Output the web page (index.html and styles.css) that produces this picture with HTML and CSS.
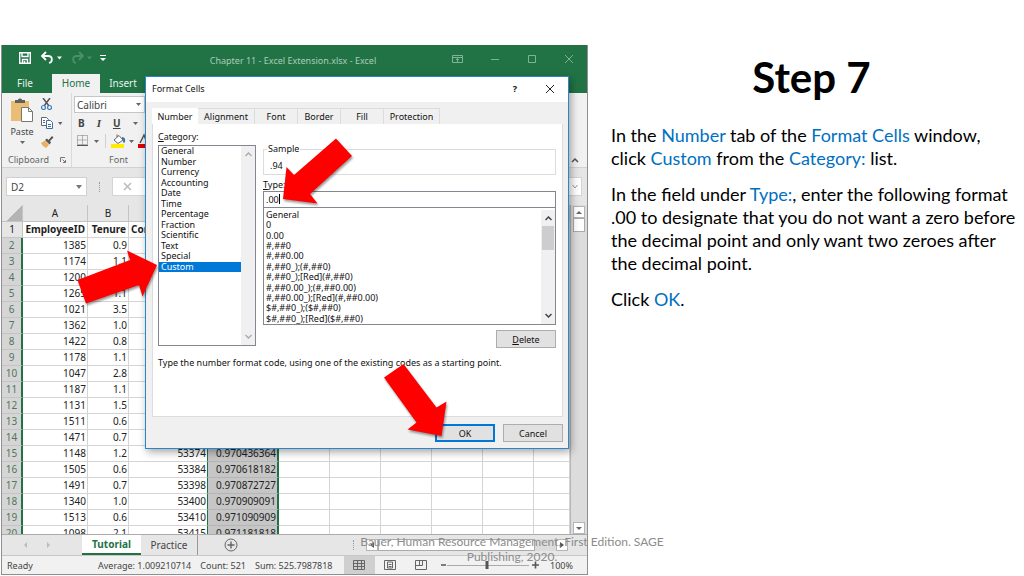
FILE: index.html
```html
<!DOCTYPE html>
<html lang="en">
<head>
<meta charset="utf-8">
<title>Step 7</title>
<link rel="stylesheet" href="styles.css">
</head>
<body>
<main class="slide">
  <section class="shot">
    <div class="excel">
      <header class="titlebar">
        <div class="quick">
          <svg class="ico" width="14" height="14" viewBox="0 0 14 14" fill="none" stroke="#fff" stroke-width="1.4"><path d="M1.7 1.7h10.6v10.6H1.700zM4 2v3.500h6V2M4.500 12V8.500h5V12M6.500 10v2"/></svg>
          <svg class="ico" width="22" height="14" viewBox="0 0 22 14" fill="none" stroke="#fff" stroke-width="1.800"><path d="M6 1L2 5l4 4M2.500 5H8c5 0 5 6 1 7"/><path d="M17 5.500h5l-2.500 3z" fill="#fff" stroke="none"/></svg>
          <svg class="ico" width="22" height="14" viewBox="0 0 22 14" fill="none" stroke="#4c9069" stroke-width="1.800"><path d="M9 1l4 4-4 4M12.500 5H7c-5 0-5 6-1 7"/><path d="M17 5.500h5l-2.500 3z" fill="#4c9069" stroke="none"/></svg>
          <svg class="ico" width="6" height="8" viewBox="0 0 6 8"><path d="M0 1h6v1H0zM0 4h6L3 7z" fill="#fff"/></svg>
        </div>
        <span class="doc">Chapter 11 - Excel Extension.xlsx - Excel</span>
        <div class="winbtns">
          <svg width="11" height="10" viewBox="0 0 11 10" fill="none" stroke="#7db594"><path d="M.5 1.500h10v7H.5zM.5 3.500h10M5.500 8V4.500M4 6l1.500-1.500L7 6"/></svg>
          <svg width="10" height="10" viewBox="0 0 10 10" stroke="#7db594"><path d="M1 5.500h8"/></svg>
          <svg width="10" height="10" viewBox="0 0 10 10" fill="none" stroke="#7db594"><path d="M1.500 1.500h7v7h-7z"/></svg>
          <svg width="10" height="10" viewBox="0 0 10 10" stroke="#7db594"><path d="M1 1l8 8M9 1L1 9"/></svg>
        </div>
      </header>
      <nav class="tabs">
        <button class="tab">File</button>
        <button class="tab tab-on">Home</button>
        <button class="tab">Insert</button>
      </nav>
      <div class="ribbon">
        <div class="group clip">
          <div class="paste">
            <svg width="24" height="25" viewBox="0 0 24 25"><path d="M1 3h18v20H1z" fill="#e9bd72"/><path d="M5 5V2h3c0-2 4-2 4 0h3v3z" fill="#606060"/><path d="M11.500 9.500h7l4 4v10h-11z" fill="#fff" stroke="#777"/><path d="M18.500 9.500v4h4" fill="none" stroke="#777"/></svg>
            <span>Paste</span>
            <svg width="5" height="3" viewBox="0 0 5 3"><path d="M0 0h5L2.500 3z" fill="#666"/></svg>
          </div>
          <div class="clip-tools">
            <svg width="24" height="12" viewBox="0 0 24 12" fill="none"><path d="M3 0l6 8M10 0L4 8" stroke="#555" stroke-width="1.500"/><circle cx="3.500" cy="9.500" r="2" stroke="#3a7fc0" stroke-width="1.200"/><circle cx="9.500" cy="9.500" r="2" stroke="#3a7fc0" stroke-width="1.200"/></svg>
            <svg width="24" height="12" viewBox="0 0 24 12" fill="#fff"><path d="M1.500.5h5l2 2v6h-7z" stroke="#666"/><path d="M6.500 3.500h4l2 2v6h-6z" stroke="#3f6f9f"/><path d="M3 3.500h2M3 5.500h2M8 7.500h3M8 9.500h3" stroke="#3f6f9f"/><path d="M18 5h4.500l-2.300 3z" fill="#666"/></svg>
            <svg width="24" height="12" viewBox="0 0 24 12"><path d="M1 7l4-2.500L9 9l-3 3C4 11 2 9 1 7z" fill="#eab060"/><path d="M5 4l2-1.500 1.500 1.500L12 0l1.500 1.500L10 5l1 1.500-1.500 2z" fill="#555"/></svg>
          </div>
          <span class="glabel">Clipboard</span>
          <svg class="launch" width="6" height="6" viewBox="0 0 6 6" fill="none" stroke="#777"><path d="M.5 5V.5H5M2.500 2.500l3 3M5.500 3v2.500H3"/></svg>
        </div>
        <div class="group font">
          <div class="fontbox">Calibri<svg width="5" height="3" viewBox="0 0 5 3"><path d="M0 0h5L2.500 3z" fill="#666"/></svg></div>
          <div class="biu"><b>B</b><i>I</i><u>U</u><svg width="5" height="3" viewBox="0 0 5 3"><path d="M0 0h5L2.500 3z" fill="#666"/></svg></div>
          <svg class="fills" width="74" height="16" viewBox="0 0 74 16" fill="none"><path d="M.5 2.500h10v9H.5zM5.500 2.500v9M.5 7h10" stroke="#777" stroke-dasharray="1 1"/><path d="M0 12.500h11" stroke="#555"/><path d="M17 7h5l-2.500 3zM52 7h5l-2.500 3z" fill="#666"/><path d="M28.500 1v14" stroke="#d0d0d0"/><path d="M37 7l5-4.500 4 4.500-5 3.500zM40 4V1.500" fill="#fff" stroke="#666"/><path d="M45 5c3 0 2 3 2 4.500" stroke="#3573a8" stroke-width="2"/><path d="M34 11h13v4H34z" fill="#ffec00"/><path d="M61 11h10v4H61z" fill="#e00000"/><path d="M63 10l4-8 3 8" stroke="#555" stroke-width="1.500"/></svg>
          <span class="glabel">Font</span>
        </div>
        <svg class="collapse" width="8" height="6" viewBox="0 0 8 6" fill="none" stroke="#555" stroke-width="1.500"><path d="M1 5l3-3 3 3"/></svg>
      </div>
      <div class="formula">
        <div class="namebox">D2<svg width="6" height="4" viewBox="0 0 6 4"><path d="M0 0h6L3 4z" fill="#777"/></svg></div>
        <span class="dots"></span>
        <div class="fx"><svg width="9" height="9" viewBox="0 0 9 9" stroke="#bbb" stroke-width="1.500"><path d="M1 1l7 7M8 1L1 8"/></svg>
          <svg width="6" height="5" viewBox="0 0 6 5" fill="none" stroke="#999"><path d="M.5 1L3 4l2.500-3"/></svg></div>
      </div>
      <div class="sheet">
        <div class="cells">
          <table class="grid">
            <colgroup><col class="c-n"><col class="c-a"><col class="c-b"><col class="c-c"><col class="c-d"><col class="c-e"><col class="c-e"><col class="c-e"><col class="c-e"><col class="c-e"><col></colgroup>
            <thead><tr><th class="corner"></th><th>A</th><th>B</th><th>C</th><th>D</th><th>E</th><th>F</th><th>G</th><th>H</th><th>I</th><th></th></tr></thead>
            <tbody>
            <tr class="names"><th>1</th><td>EmployeeID</td><td>Tenure</td><td>Comp</td><td></td><td></td><td></td><td></td><td></td><td></td><td></td></tr>
            <tr><th>2</th><td>1385</td><td>0.9</td><td></td><td></td><td></td><td></td><td></td><td></td><td></td><td></td></tr>
            <tr><th>3</th><td>1174</td><td>1.1</td><td></td><td></td><td></td><td></td><td></td><td></td><td></td><td></td></tr>
            <tr><th>4</th><td>1200</td><td></td><td></td><td></td><td></td><td></td><td></td><td></td><td></td><td></td></tr>
            <tr><th>5</th><td>1265</td><td>1.1</td><td></td><td></td><td></td><td></td><td></td><td></td><td></td><td></td></tr>
            <tr><th>6</th><td>1021</td><td>3.5</td><td></td><td></td><td></td><td></td><td></td><td></td><td></td><td></td></tr>
            <tr><th>7</th><td>1362</td><td>1.0</td><td></td><td></td><td></td><td></td><td></td><td></td><td></td><td></td></tr>
            <tr><th>8</th><td>1422</td><td>0.8</td><td></td><td></td><td></td><td></td><td></td><td></td><td></td><td></td></tr>
            <tr><th>9</th><td>1178</td><td>1.1</td><td></td><td></td><td></td><td></td><td></td><td></td><td></td><td></td></tr>
            <tr><th>10</th><td>1047</td><td>2.8</td><td></td><td></td><td></td><td></td><td></td><td></td><td></td><td></td></tr>
            <tr><th>11</th><td>1187</td><td>1.1</td><td></td><td></td><td></td><td></td><td></td><td></td><td></td><td></td></tr>
            <tr><th>12</th><td>1131</td><td>1.5</td><td></td><td></td><td></td><td></td><td></td><td></td><td></td><td></td></tr>
            <tr><th>13</th><td>1511</td><td>0.6</td><td></td><td></td><td></td><td></td><td></td><td></td><td></td><td></td></tr>
            <tr><th>14</th><td>1471</td><td>0.7</td><td></td><td></td><td></td><td></td><td></td><td></td><td></td><td></td></tr>
            <tr><th>15</th><td>1148</td><td>1.2</td><td>53374</td><td>0.970436364</td><td></td><td></td><td></td><td></td><td></td><td></td></tr>
            <tr><th>16</th><td>1505</td><td>0.6</td><td>53384</td><td>0.970618182</td><td></td><td></td><td></td><td></td><td></td><td></td></tr>
            <tr><th>17</th><td>1491</td><td>0.7</td><td>53398</td><td>0.970872727</td><td></td><td></td><td></td><td></td><td></td><td></td></tr>
            <tr><th>18</th><td>1340</td><td>1.0</td><td>53400</td><td>0.970909091</td><td></td><td></td><td></td><td></td><td></td><td></td></tr>
            <tr><th>19</th><td>1513</td><td>0.6</td><td>53410</td><td>0.971090909</td><td></td><td></td><td></td><td></td><td></td><td></td></tr>
            <tr><th>20</th><td>1098</td><td>2.1</td><td>53415</td><td>0.971181818</td><td></td><td></td><td></td><td></td><td></td><td></td></tr>
            </tbody>
          </table>
        </div>
        <div class="vscroll">
          <span class="sbtn"><svg width="6" height="3" viewBox="0 0 6 3"><path d="M0 3h6L3 0z" fill="#666"/></svg></span>
          <span class="sthumb"></span>
          <span class="sbtn sdown"><svg width="6" height="3" viewBox="0 0 6 3"><path d="M0 0h6L3 3z" fill="#666"/></svg></span>
        </div>
      </div>
      <div class="sheettabs">
        <div class="nav"><svg width="26" height="6" viewBox="0 0 26 6" fill="#bbb"><path d="M3 0v6L0 3zM23 0v6l3-3z"/></svg></div>
        <button class="stab stab-on">Tutorial</button>
        <button class="stab">Practice</button>
        <svg class="add" width="14" height="14" viewBox="0 0 14 14" fill="none" stroke="#666"><circle cx="7" cy="7" r="6"/><path d="M7 3.500v7M3.500 7h7" stroke-width="1.400"/></svg>
        <span class="dots"></span>
        <div class="hscroll">
          <span class="hbtn"><svg width="4" height="6" viewBox="0 0 4 6"><path d="M4 0v6L0 3z" fill="#555"/></svg></span>
          <span class="hthumb"></span>
          <span class="hbtn"><svg width="4" height="6" viewBox="0 0 4 6"><path d="M0 0v6l4-3z" fill="#555"/></svg></span>
        </div>
      </div>
      <footer class="status">
        <span class="ready">Ready</span>
        <span>Average: 1.009210714</span>
        <span>Count: 521</span>
        <span>Sum: 525.7987818</span>
        <div class="views">
          <span class="view view-on"><svg width="12" height="12" viewBox="0 0 12 12" fill="none" stroke="#666"><path d="M.5 1.500h11v9H.5zM.5 4.500h11M.5 7.500h11M4.500 1.500v9M8.500 1.500v9"/></svg></span>
          <span class="view"><svg width="12" height="12" viewBox="0 0 12 12" fill="none" stroke="#666"><path d="M.5 1.500h11v9H.5zM3.500 3v6h5V3zM4.500 5.500h3M4.500 7.500h3"/></svg></span>
          <span class="view"><svg width="12" height="12" viewBox="0 0 12 12" fill="none" stroke="#666"><path d="M.5 1.500h11v9H.5zM4.500 1.500v5M7.500 1.500v5M.5 6.500h7"/></svg></span>
        </div>
        <svg class="zoombar" width="98" height="10" viewBox="0 0 98 10" stroke="#555"><path d="M0 5h5M91 5h7M94.500 1.500v7" stroke-width="1.600"/><path d="M6 5.500h82" stroke="#aaa"/><path d="M46 1v8" stroke-width="3"/></svg>
        <span class="pct">100%</span>
      </footer>
    </div>

    <div class="dialog">
      <div class="dtitle"><span>Format Cells</span>
        <b>?</b>
        <svg width="10" height="10" viewBox="0 0 10 10" stroke="#222"><path d="M1 1l8 8M9 1L1 9"/></svg></div>
      <div class="dtabs">
        <button class="dtab dtab-on">Number</button>
        <button class="dtab">Alignment</button>
        <button class="dtab">Font</button>
        <button class="dtab">Border</button>
        <button class="dtab">Fill</button>
        <button class="dtab">Protection</button>
      </div>
      <div class="panel">
        <div class="cols">
          <div class="left">
            <span class="lbl"><u>C</u>ategory:</span>
            <div class="catbox">
              <ul class="cats"><li>General</li><li>Number</li><li>Currency</li><li>Accounting</li><li>Date</li><li>Time</li><li>Percentage</li><li>Fraction</li><li>Scientific</li><li>Text</li><li>Special</li><li class="sel">Custom</li></ul>
              <div class="lscroll"><svg width="7" height="5" viewBox="0 0 7 5" fill="none" stroke="#aaa" stroke-width="1.300"><path d="M.5 4l3-3 3 3"/></svg><svg width="7" height="5" viewBox="0 0 7 5" fill="none" stroke="#aaa" stroke-width="1.300"><path d="M.5 1l3 3 3-3"/></svg></div>
            </div>
          </div>
          <div class="right">
            <fieldset class="sample"><legend>Sample</legend><span>.94</span></fieldset>
            <label class="lbl" for="type"><u>T</u>ype:</label>
            <div class="typefield"><input id="type" type="text" value=".00"><i class="caret"></i></div>
            <div class="typebox">
              <ul class="types"><li>General</li><li>0</li><li>0.00</li><li>#,##0</li><li>#,##0.00</li><li>#,##0_);(#,##0)</li><li>#,##0_);[Red](#,##0)</li><li>#,##0.00_);(#,##0.00)</li><li>#,##0.00_);[Red](#,##0.00)</li><li>$#,##0_);($#,##0)</li><li>$#,##0_);[Red]($#,##0)</li></ul>
              <div class="lscroll"><svg width="7" height="5" viewBox="0 0 7 5" fill="none" stroke="#444" stroke-width="1.500"><path d="M.5 4l3-3 3 3"/></svg><span class="lthumb"></span><svg width="7" height="5" viewBox="0 0 7 5" fill="none" stroke="#444" stroke-width="1.500"><path d="M.5 1l3 3 3-3"/></svg></div>
            </div>
            <button class="btn del"><u>D</u>elete</button>
          </div>
        </div>
        <p class="hint">Type the number format code, using one of the existing codes as a starting point.</p>
      </div>
      <div class="actions"><button class="btn ok">OK</button><button class="btn">Cancel</button></div>
    </div>

    <svg class="arrows" width="588" height="576" viewBox="0 0 588 576" fill="#fe0000">
      <path d="M283 199l3.500-32 7.500 8 42-36.500 16 17.500-42 38 7.500 9.500z"/>
      <path d="M157 265l-30-14.500 3 9.500-52.500 20 8.500 23.500 53-18.500 3.500 11.500z"/>
      <path d="M441.500 436l5-34.500-10 6-33-43.500-19.500 13.500 32.500 45-9 7z"/>
    </svg>
  </section>

  <section class="text">
    <h1>Step 7</h1>
    <p>In the <em>Number</em> tab of the <em>Format Cells</em> window, click <em>Custom</em> from the <em>Category:</em> list.</p>
    <p>In the field under <em>Type:</em>, enter the following format .00 to designate that you do not want a zero before the decimal point and only want two zeroes after the decimal point.</p>
    <p>Click <em>OK</em>.</p>
  </section>
  <footer class="credit">Bauer, Human Resource Management, First Edition. SAGE Publishing, 2020.</footer>
</main>
</body>
</html>
```

FILE: styles.css
```css
* { box-sizing: border-box; }
body { margin: 0; background: #fff; color: #000; }
button, input { font: inherit; color: inherit; margin: 0; padding: 0; border: 0; background: none; }
ul { list-style: none; margin: 0; padding: 0; }
svg { display: block; flex: none; }

.slide { position: relative; display: grid; grid-template-columns: 588fr 436fr; min-height: 100vh; }
.shot { position: relative; padding: 45px 0 0 1px; font-family: "Noto Sans", "Open Sans", sans-serif; font-size: 10px; }

/* Workbook window */
.excel { display: flex; flex-direction: column; border: 1px solid #8f8f8f; border-top: 0; color: #444; background: #e6e6e6; }
.titlebar { display: flex; align-items: center; height: 29px; background: #217346; color: #a9cdb8; }
.quick { display: flex; align-items: center; gap: 8px; padding-left: 16px; width: 140px; margin-top: -3px; }
.doc { flex: 1; text-align: center; font-size: 9px; padding: 2px 0 0 34px; }
.winbtns { display: flex; gap: 27px; padding: 0 13px 2px 42px; }
.tabs { display: flex; height: 19px; background: #217346; color: #fff; }
.tab { width: 48px; padding: 0 0 1px; text-align: center; color: #e6f2ea; }
.tab:first-child { width: 50px; padding-right: 4px; }
.tab:last-child { padding-right: 2px; }
.tab-on { background: #f1f1f1; color: #217346; }
.ribbon { display: flex; height: 75px; background: #f1f1f1; border-bottom: 1px solid #d2d2d2; }
.group { position: relative; border-right: 1px solid #dadada; }
.clip { display: flex; width: 70px; padding: 5px 0 0 6px; gap: 4px; }
.paste { display: flex; flex-direction: column; align-items: center; width: 28px; font-size: 9px; line-height: 12px; gap: 3px; }
.clip-tools { display: flex; flex-direction: column; gap: 7px; }
.glabel { position: absolute; left: 0; right: 0; bottom: 1px; text-align: center; font-size: 9px; color: #666; }
.clip .glabel { right: 16px; }
.launch { position: absolute; right: 5px; bottom: 4px; }
.font { width: 94px; padding: 3px 0 0 2px; }
.fontbox { display: flex; align-items: center; justify-content: space-between; width: 71px; height: 17px; padding: 0 3px 0 2px; border: 1px solid #c6c6c6; background: #fff; }
.biu { display: flex; align-items: center; gap: 12px; padding: 3px 0 0 4px; line-height: 14px; }
.biu i { font-family: "Liberation Serif", serif; font-size: 11px; font-weight: bold; }
.biu u { font-weight: bold; }
.fills { margin: 3px 0 0 3px; }
.collapse { margin: 64px 8px 0 auto; }
.formula { display: flex; align-items: center; height: 37px; padding: 0 5px 0 4px; }
.namebox { display: flex; align-items: center; justify-content: space-between; width: 81px; height: 19px; padding: 0 4px; border: 1px solid #d0d0d0; background: #fff; }
.dots { width: 1px; height: 10px; margin: 0 12px; border-left: 1px dotted #999; }
.fx { display: flex; flex: 1; align-items: center; justify-content: space-between; height: 19px; padding: 0 3px 0 10px; background: #fff; border: 1px solid #d4d4d4; }

.sheet { display: flex; height: 329px; }
.cells { flex: 1; overflow: hidden; min-width: 0; }
.grid { width: 100%; table-layout: fixed; border-collapse: separate; border-spacing: 0; background: #fff; color: #222; }
.c-n { width: 21px; } .c-a { width: 65px; } .c-b { width: 41px; } .c-c { width: 79px; } .c-d { width: 71px; } .c-e { width: 51px; }
.grid td, .grid th { height: 16px; padding: 0 1px; line-height: 15px; border-right: 1px solid #d4d4d4; border-bottom: 1px solid #d4d4d4; text-align: right; white-space: nowrap; }
.grid th { padding: 0; background: #e6e6e6; font-weight: normal; text-align: center; border-color: #c4c4c4; }
.grid thead th { height: 17px; line-height: 16px; }
.corner { background: linear-gradient(135deg, #e6e6e6 58%, #b4b4b4 58%) !important; }
.names td { font-weight: bold; padding: 0 2px; }
.names td:nth-child(4) { text-align: left; }
.grid tbody tr:not(.names) th { background: #d5d5d5; color: #4f7560; border-right: 2px solid #217346; }
.grid tbody tr:not(.names) td:nth-child(5) { background: #c6c6c6; border-right: 2px solid #217346; border-bottom-color: #b5b5b5; }
.grid tbody tr:not(.names) td:nth-child(4) { border-right: 1px solid #217346; }
.vscroll { display: flex; flex-direction: column; align-items: center; width: 17px; padding-top: 1px; border-left: 1px solid #b5b5b5; background: #dcdcdc; }
.sbtn { display: flex; align-items: center; justify-content: center; width: 12px; height: 12px; border: 1px solid #b5b5b5; background: #fff; }
.sthumb { width: 12px; height: 14px; border: 1px solid #aaa; background: #fff; }
.sdown { margin-top: auto; }

.sheettabs { display: flex; align-items: center; height: 22px; border-top: 1px solid #ababab; border-bottom: 1px solid #c8c8c8; }
.nav { width: 80px; padding-left: 22px; }
.stab { height: 20px; width: 57px; border-right: 1px solid #999; }
.stab-on { width: 59px; background: #fff; color: #217346; font-weight: bold; border-right: 0; border-bottom: 2px solid #217346; }
.add { margin: 0 auto 0 26px; }
.hscroll { display: flex; justify-content: space-between; width: 202px; margin-right: 19px; height: 12px; background: #dcdcdc; }
.hbtn { display: flex; align-items: center; justify-content: center; width: 12px; border: 1px solid #b5b5b5; background: #fff; }
.hthumb { width: 157px; margin-right: auto; border: 1px solid #aaa; background: #fff; }
.status { display: flex; align-items: center; height: 18px; font-size: 9px; background: #f1f1f1; gap: 9px; padding-left: 5px; white-space: nowrap; }
.ready { width: 82px; }
.views { display: flex; align-self: stretch; margin-left: 2px; }
.view { display: flex; align-items: center; justify-content: center; width: 31px; }
.view-on { background: #cfcfcf; }
.zoombar { margin-left: -5px; }
.pct { margin-left: auto; padding-right: 14px; }

/* Format Cells dialog */
.dialog { position: absolute; left: 145px; top: 76px; width: 424px; display: flex; flex-direction: column; padding: 0 5px 6px 6px; border: 1px solid #2a86c8; background: #f0f0f0; box-shadow: 2px 3px 8px rgba(0,0,0,.35); color: #111; font-size: 9px; }
.dtitle { display: flex; align-items: center; height: 25px; margin: 0 -5px 0 -6px; padding: 0 13px 2px 6px; background: #fff; }
.dtitle span { flex: 1; }
.dtitle b { margin-right: 28px; }
.dtabs { display: flex; height: 22px; padding-top: 6px; }
.dtab { width: 43px; border: 1px solid #dcdcdc; border-left: 0; border-bottom: 0; }
.dtab-on { width: 46px; background: #fff; border: 0; }
.dtab:nth-child(2) { width: 57px; }
.dtab:nth-child(6) { width: 56px; }
.panel { height: 293px; padding: 7px 6px 0 5px; border: 1px solid #dcdcdc; border-top: 0; background: #fff; }
.cols { display: flex; gap: 7px; }
.left { width: 98px; }
.lbl { display: block; height: 14px; line-height: 12px; }
.catbox { display: flex; height: 201px; border: 1px solid #828790; }
.cats { flex: 1; display: grid; grid-template-rows: repeat(12, 1fr); height: 126px; line-height: 10px; }
.cats li, .types li { padding-left: 2px; }
.sel { background: #0078d7; color: #fff; }
.lscroll { display: flex; flex-direction: column; justify-content: space-between; align-items: center; width: 14px; padding: 6px 0; background: #f0f0f0; }
.right { flex: 1; display: flex; flex-direction: column; }
.sample { margin: 12px 0 4px; padding: 5px 6px 0; height: 32px; border: 1px solid #dcdcdc; line-height: 12px; }
.sample legend { padding: 0 1px; margin-left: -3px; }
.right .lbl { height: 12px; }
.typefield { position: relative; height: 17px; border: 1px solid #828790; }
.typefield input { width: 100%; height: 15px; padding: 0 2px; display: block; outline: 0; }
.caret { position: absolute; left: 15px; top: 2px; width: 1px; height: 10px; background: #000; }
.typebox { display: flex; height: 117px; padding-top: 2px; border: 1px solid #828790; border-top: 0; }
.types { flex: 1; display: grid; grid-template-rows: repeat(11, 1fr); height: 114px; line-height: 10px; }
.typebox .lscroll { justify-content: flex-start; gap: 5px; }
.lthumb { width: 12px; height: 24px; background: #cdcdcd; margin-bottom: auto; }
.btn { width: 60px; height: 18px; border: 1px solid #adadad; background: #e1e1e1; text-align: center; }
.del { align-self: flex-end; margin-top: 5px; }
.hint { margin: 9px 0 0; line-height: 12px; white-space: nowrap; }
.actions { display: flex; justify-content: flex-end; gap: 8px; padding-top: 7px; }
.ok { border: 2px solid #0078d7; }

.arrows { position: absolute; left: 0; top: 0; pointer-events: none; filter: drop-shadow(1px 2px 1px rgba(0,0,0,.4)); }

/* Instructions */
.text { padding: 50px 7px 0 23px; font-family: Lato, "Open Sans", sans-serif; font-size: 18px; line-height: 23px; }
.text h1 { margin: 0 5px 20px 0; text-align: center; font-size: 42px; line-height: 54px; }
.text p { margin: 0 0 13px; }
.text em { font-style: normal; color: #0070c0; }
.credit { position: absolute; left: 50%; bottom: 12px; width: 324px; margin-left: -162px; text-align: center; font: 12px/15px Lato, "Open Sans", sans-serif; color: #8b8b8b; }
```
